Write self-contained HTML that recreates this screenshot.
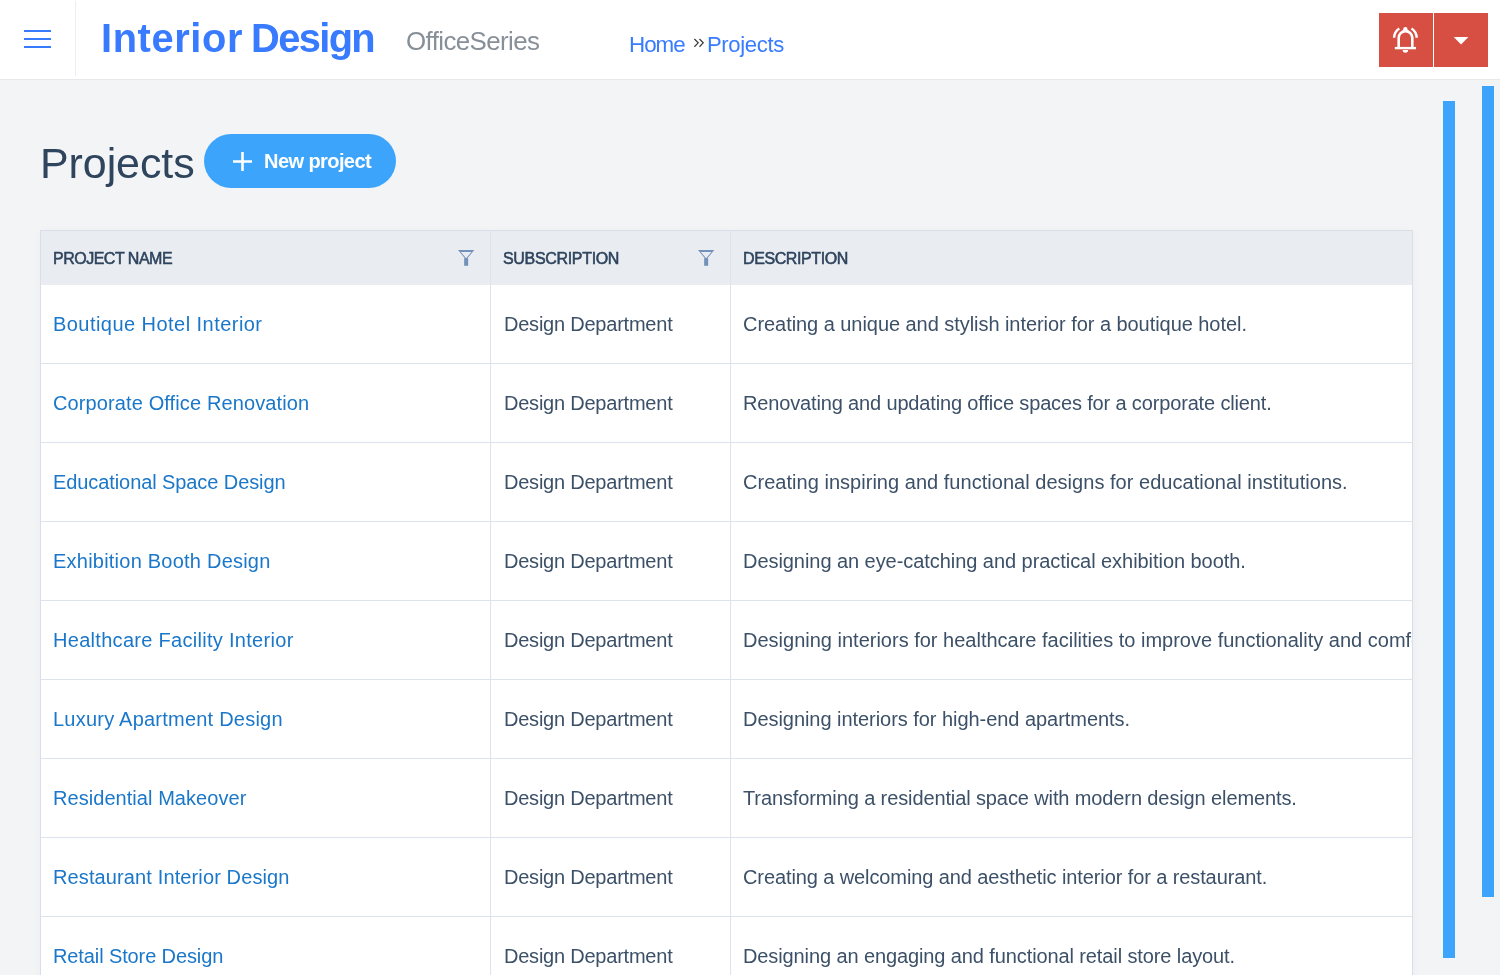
<!DOCTYPE html>
<html><head><meta charset="utf-8">
<style>
*{margin:0;padding:0;box-sizing:border-box}
html,body{width:1500px;height:975px;overflow:hidden}
body{background:#f3f4f6;font-family:"Liberation Sans",sans-serif;position:relative}
.t{position:absolute;white-space:nowrap;line-height:1;-webkit-font-smoothing:antialiased;will-change:transform}
#hdr{position:absolute;left:0;top:0;width:1500px;height:80px;background:#fff;border-bottom:1px solid #e6e8ec}
.hb{position:absolute;left:24px;width:27px;height:2px;background:#387bff}
#vdiv{position:absolute;left:75px;top:1px;width:1px;height:75px;background:#eceef1}
.rb{position:absolute;top:13px;width:54px;height:54px;background:#d64f42}
#newbtn{position:absolute;left:204px;top:134px;width:192px;height:54px;border-radius:27px;background:#3ca5fb}
#tbl{position:absolute;left:40px;top:230px;width:1373px;height:760px;border:1px solid #d8dfe8;background:#fff;overflow:hidden;box-shadow:0 2px 10px rgba(30,50,80,0.03)}
#thead{position:absolute;left:0;top:0;width:1400px;height:54px;background:#e9edf2}
.vl{position:absolute;top:0;width:1px;height:760px;background:#dce3ec}
.hl{position:absolute;left:0;width:1400px;height:1px;background:#dce3ec}
.bar{position:absolute;width:12px;background:#3ca5fb}
svg{position:absolute;overflow:visible}
</style></head><body>
<div id="hdr">
  <div class="hb" style="top:30px"></div>
  <div class="hb" style="top:38px"></div>
  <div class="hb" style="top:46px"></div>
  <div id="vdiv"></div>
  <div class="rb" style="left:1379px"></div>
  <div class="rb" style="left:1434px"></div>
  <svg style="left:1379px;top:13px" width="54" height="54" viewBox="0 0 54 54">
    <path d="M19.7 35 V24.9 a6.8 6.8 0 0 1 13.6 0 V35" fill="none" stroke="#fff" stroke-width="2.6"/>
    <path d="M15.8 35.1 H37" stroke="#fff" stroke-width="2.4"/>
    <path d="M23.7 37 a2.7 2.7 0 0 0 5.4 0 Z" fill="#fff"/>
    <circle cx="26.4" cy="16.3" r="2.2" fill="#fff"/>
    <path d="M15.1 24.8 A11.5 11.5 0 0 1 20.3 15.6" fill="none" stroke="#fff" stroke-width="2.4"/>
    <path d="M37.7 24.8 A11.5 11.5 0 0 0 32.5 15.6" fill="none" stroke="#fff" stroke-width="2.4"/>
  </svg>
  <svg style="left:1434px;top:13px" width="54" height="54" viewBox="0 0 54 54">
    <path d="M19.7 24.1 H34.4 L27.05 31.6 Z" fill="#fff"/>
  </svg>
</div>
<svg style="left:694px;top:38px" width="10" height="10" viewBox="0 0 10 10">
  <path d="M0.4 1.0 L4.2 4.85 L0.4 8.7 M5.5 1.0 L9.2 4.85 L5.5 8.7" fill="none" stroke="#3d3a3a" stroke-width="1.25"/>
</svg>
<div id="newbtn"></div>
<svg style="left:233px;top:151.5px" width="19" height="19" viewBox="0 0 19 19">
  <path d="M9.5 0 V19 M0 9.5 H19" stroke="#fff" stroke-width="2.6"/>
</svg>
<div class="t" style="left:101.00px;top:19.49px;font-size:39.82px;font-weight:bold;color:#387bff;letter-spacing:0.614px;">Interior</div>
<div class="t" style="left:251.40px;top:19.49px;font-size:39.82px;font-weight:bold;color:#387bff;letter-spacing:-1.614px;">Design</div>
<div class="t" style="left:406.00px;top:29.35px;font-size:25.88px;font-weight:normal;color:#878f98;letter-spacing:-0.591px;">OfficeSeries</div>
<div class="t" style="left:628.80px;top:33.86px;font-size:22.37px;font-weight:normal;color:#387bff;letter-spacing:-1.000px;">Home</div>
<div class="t" style="left:707.40px;top:34.12px;font-size:22.07px;font-weight:normal;color:#387bff;letter-spacing:-0.357px;">Projects</div>
<div class="t" style="left:40.40px;top:141.73px;font-size:42.96px;font-weight:normal;color:#2f445d;letter-spacing:-0.071px;">Projects</div>
<div class="t" style="left:264.00px;top:150.52px;font-size:20.06px;font-weight:bold;color:#ffffff;letter-spacing:-0.600px;">New project</div>
<div id="tbl">
  <div id="thead"></div>
<div class="hl" style="top:132px"></div>
<div class="hl" style="top:211px"></div>
<div class="hl" style="top:290px"></div>
<div class="hl" style="top:369px"></div>
<div class="hl" style="top:448px"></div>
<div class="hl" style="top:527px"></div>
<div class="hl" style="top:606px"></div>
<div class="hl" style="top:685px"></div>
<div class="hl" style="top:764px"></div>
<div class="vl" style="left:449px"></div>
<div class="vl" style="left:689px"></div>
<div class="t" style="left:11.80px;top:20.36px;font-size:16.00px;font-weight:normal;color:#2f445d;letter-spacing:-0.500px;-webkit-text-stroke:0.55px #2f445d">PROJECT NAME</div>
<div class="t" style="left:462.40px;top:20.16px;font-size:16.00px;font-weight:normal;color:#2f445d;letter-spacing:-0.327px;-webkit-text-stroke:0.55px #2f445d">SUBSCRIPTION</div>
<div class="t" style="left:702.00px;top:20.16px;font-size:16.00px;font-weight:normal;color:#2f445d;letter-spacing:-0.400px;-webkit-text-stroke:0.55px #2f445d">DESCRIPTION</div>
<div class="t" style="left:12.00px;top:83.07px;font-size:20.00px;font-weight:normal;color:#1a77c9;letter-spacing:0.455px;">Boutique Hotel Interior</div>
<div class="t" style="left:462.50px;top:83.07px;font-size:20.00px;font-weight:normal;color:#3c5068;letter-spacing:-0.225px;">Design Department</div>
<div class="t" style="left:702.00px;top:83.07px;font-size:20.00px;font-weight:normal;color:#3c5068;letter-spacing:-0.051px;">Creating a unique and stylish interior for a boutique hotel.</div>
<div class="t" style="left:12.00px;top:162.07px;font-size:20.00px;font-weight:normal;color:#1a77c9;letter-spacing:0.115px;">Corporate Office Renovation</div>
<div class="t" style="left:462.50px;top:162.07px;font-size:20.00px;font-weight:normal;color:#3c5068;letter-spacing:-0.225px;">Design Department</div>
<div class="t" style="left:702.00px;top:162.07px;font-size:20.00px;font-weight:normal;color:#3c5068;letter-spacing:-0.150px;">Renovating and updating office spaces for a corporate client.</div>
<div class="t" style="left:12.00px;top:241.07px;font-size:20.00px;font-weight:normal;color:#1a77c9;letter-spacing:-0.087px;">Educational Space Design</div>
<div class="t" style="left:462.50px;top:241.07px;font-size:20.00px;font-weight:normal;color:#3c5068;letter-spacing:-0.225px;">Design Department</div>
<div class="t" style="left:702.00px;top:241.07px;font-size:20.00px;font-weight:normal;color:#3c5068;letter-spacing:0.029px;">Creating inspiring and functional designs for educational institutions.</div>
<div class="t" style="left:12.00px;top:320.07px;font-size:20.00px;font-weight:normal;color:#1a77c9;letter-spacing:0.227px;">Exhibition Booth Design</div>
<div class="t" style="left:462.50px;top:320.07px;font-size:20.00px;font-weight:normal;color:#3c5068;letter-spacing:-0.225px;">Design Department</div>
<div class="t" style="left:702.00px;top:320.07px;font-size:20.00px;font-weight:normal;color:#3c5068;letter-spacing:-0.054px;">Designing an eye-catching and practical exhibition booth.</div>
<div class="t" style="left:12.00px;top:399.07px;font-size:20.00px;font-weight:normal;color:#1a77c9;letter-spacing:0.296px;">Healthcare Facility Interior</div>
<div class="t" style="left:462.50px;top:399.07px;font-size:20.00px;font-weight:normal;color:#3c5068;letter-spacing:-0.225px;">Design Department</div>
<div class="t" style="left:702.00px;top:399.07px;font-size:20.00px;font-weight:normal;color:#3c5068;letter-spacing:0.000px;">Designing interiors for healthcare facilities to improve functionality and comfort.</div>
<div class="t" style="left:12.00px;top:478.07px;font-size:20.00px;font-weight:normal;color:#1a77c9;letter-spacing:0.227px;">Luxury Apartment Design</div>
<div class="t" style="left:462.50px;top:478.07px;font-size:20.00px;font-weight:normal;color:#3c5068;letter-spacing:-0.225px;">Design Department</div>
<div class="t" style="left:702.00px;top:478.07px;font-size:20.00px;font-weight:normal;color:#3c5068;letter-spacing:-0.047px;">Designing interiors for high-end apartments.</div>
<div class="t" style="left:12.00px;top:557.07px;font-size:20.00px;font-weight:normal;color:#1a77c9;letter-spacing:0.053px;">Residential Makeover</div>
<div class="t" style="left:462.50px;top:557.07px;font-size:20.00px;font-weight:normal;color:#3c5068;letter-spacing:-0.225px;">Design Department</div>
<div class="t" style="left:702.20px;top:557.07px;font-size:20.00px;font-weight:normal;color:#3c5068;letter-spacing:-0.113px;">Transforming a residential space with modern design elements.</div>
<div class="t" style="left:12.00px;top:636.07px;font-size:20.00px;font-weight:normal;color:#1a77c9;letter-spacing:0.120px;">Restaurant Interior Design</div>
<div class="t" style="left:462.50px;top:636.07px;font-size:20.00px;font-weight:normal;color:#3c5068;letter-spacing:-0.225px;">Design Department</div>
<div class="t" style="left:702.00px;top:636.07px;font-size:20.00px;font-weight:normal;color:#3c5068;letter-spacing:-0.100px;">Creating a welcoming and aesthetic interior for a restaurant.</div>
<div class="t" style="left:12.00px;top:715.07px;font-size:20.00px;font-weight:normal;color:#1a77c9;letter-spacing:-0.111px;">Retail Store Design</div>
<div class="t" style="left:462.50px;top:715.07px;font-size:20.00px;font-weight:normal;color:#3c5068;letter-spacing:-0.225px;">Design Department</div>
<div class="t" style="left:702.00px;top:715.07px;font-size:20.00px;font-weight:normal;color:#3c5068;letter-spacing:-0.107px;">Designing an engaging and functional retail store layout.</div>
  <svg style="left:417px;top:19px" width="16" height="16" viewBox="0 0 16 16">
    <path d="M0 0 H16.3 L8.15 9.8 Z M2.8 1.9 L8.15 8.3 L13.5 1.9 Z" fill="#7291bb" fill-rule="evenodd"/>
    <rect x="6.15" y="8.2" width="4" height="7.6" fill="#7291bb"/>
  </svg>
  <svg style="left:657px;top:19px" width="16" height="16" viewBox="0 0 16 16">
    <path d="M0 0 H16.3 L8.15 9.8 Z M2.8 1.9 L8.15 8.3 L13.5 1.9 Z" fill="#7291bb" fill-rule="evenodd"/>
    <rect x="6.15" y="8.2" width="4" height="7.6" fill="#7291bb"/>
  </svg>
</div>
<div class="bar" style="left:1443px;top:101px;height:857px"></div>
<div class="bar" style="left:1482px;top:86px;height:811px"></div>
</body></html>
